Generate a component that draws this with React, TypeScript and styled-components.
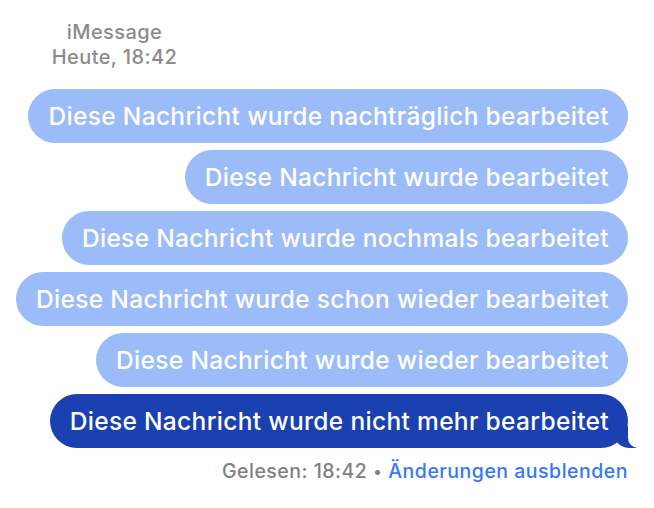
import styled, { createGlobalStyle } from "styled-components";

const GlobalStyle = createGlobalStyle`
  body {
    margin: 0;
    background: #ffffff;
    font-family: Inter, "Noto Sans", "Liberation Sans", sans-serif;
  }
`;

const Page = styled.div`
  width: 654px;
  height: 508px;
  box-sizing: border-box;
  padding: 20px 26px 0 0;
`;

const Header = styled.header`
  width: 229px;
  text-align: center;
  color: #8b8b8b;
  font-size: 20px;
  font-weight: 500;
  letter-spacing: 0.4px;
  line-height: 24.5px;
`;

const Thread = styled.div`
  margin-top: 20px;
  display: flex;
  flex-direction: column;
  align-items: flex-end;
  gap: 7px;
`;

const Bubble = styled.div<{ $sent?: boolean }>`
  position: relative;
  height: 54px;
  box-sizing: border-box;
  padding: 0 19px 0 20px;
  display: flex;
  align-items: center;
  border-radius: 27px;
  background: ${(p) => (p.$sent ? "#1a40b1" : "#9bbcf9")};
  color: #ffffff;
  font-size: 24.5px;
  font-weight: 500;
  letter-spacing: 0.33px;
  white-space: nowrap;

  ${(p) =>
    p.$sent &&
    `
    &::before {
      content: "";
      position: absolute;
      bottom: 0;
      right: -8px;
      width: 22px;
      height: 22px;
      background: #1a40b1;
      border-bottom-left-radius: 16px 14px;
    }
    &::after {
      content: "";
      position: absolute;
      bottom: 0;
      right: -26px;
      width: 26px;
      height: 22px;
      background: #ffffff;
      border-bottom-left-radius: 10px;
    }
  `}
`;

const Footer = styled.div`
  margin-top: 11px;
  display: flex;
  justify-content: flex-end;
  gap: 6px;
  font-size: 19.5px;
  font-weight: 500;
  letter-spacing: 0.5px;
  line-height: 24px;
  color: #808080;
`;

const Dot = styled.span`
  font-size: 16px;
`;

const Link = styled.span`
  color: #3478f6;
`;

const messages = [
  "Diese Nachricht wurde nachträglich bearbeitet",
  "Diese Nachricht wurde bearbeitet",
  "Diese Nachricht wurde nochmals bearbeitet",
  "Diese Nachricht wurde schon wieder bearbeitet",
  "Diese Nachricht wurde wieder bearbeitet",
];

export default function App() {
  return (
    <Page>
      <GlobalStyle />
      <Header>
        <div>iMessage</div>
        <div>Heute, 18:42</div>
      </Header>
      <Thread>
        {messages.map((m) => (
          <Bubble key={m}>{m}</Bubble>
        ))}
        <Bubble $sent>Diese Nachricht wurde nicht mehr bearbeitet</Bubble>
      </Thread>
      <Footer>
        <span>Gelesen: 18:42</span>
        <Dot>•</Dot>
        <Link>Änderungen ausblenden</Link>
      </Footer>
    </Page>
  );
}
